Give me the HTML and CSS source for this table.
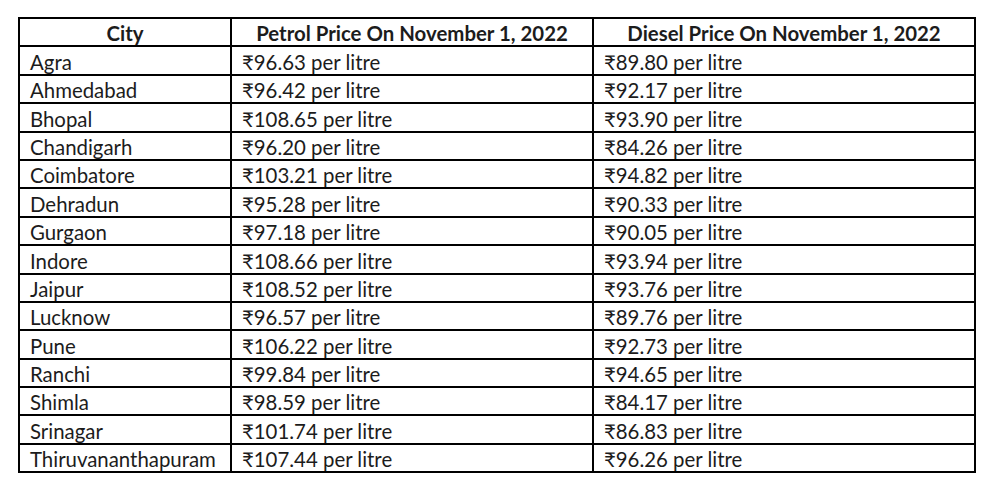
FILE: index.html
```html
<!DOCTYPE html>
<html lang="en">
<head>
<meta charset="utf-8">
<title>Fuel Prices</title>
<link rel="stylesheet" href="styles.css">
</head>
<body>
<div class="page">
<table class="prices">
<colgroup><col class="c-city"><col class="c-petrol"><col class="c-diesel"></colgroup>
<thead>
<tr><th>City</th><th>Petrol Price On November 1, 2022</th><th>Diesel Price On November 1, 2022</th></tr>
</thead>
<tbody>
<tr><td>Agra</td><td>₹96.63 per litre</td><td>₹89.80 per litre</td></tr>
<tr><td>Ahmedabad</td><td>₹96.42 per litre</td><td>₹92.17 per litre</td></tr>
<tr><td>Bhopal</td><td>₹108.65 per litre</td><td>₹93.90 per litre</td></tr>
<tr><td>Chandigarh</td><td>₹96.20 per litre</td><td>₹84.26 per litre</td></tr>
<tr><td>Coimbatore</td><td>₹103.21 per litre</td><td>₹94.82 per litre</td></tr>
<tr><td>Dehradun</td><td>₹95.28 per litre</td><td>₹90.33 per litre</td></tr>
<tr><td>Gurgaon</td><td>₹97.18 per litre</td><td>₹90.05 per litre</td></tr>
<tr><td>Indore</td><td>₹108.66 per litre</td><td>₹93.94 per litre</td></tr>
<tr><td>Jaipur</td><td>₹108.52 per litre</td><td>₹93.76 per litre</td></tr>
<tr><td>Lucknow</td><td>₹96.57 per litre</td><td>₹89.76 per litre</td></tr>
<tr><td>Pune</td><td>₹106.22 per litre</td><td>₹92.73 per litre</td></tr>
<tr><td>Ranchi</td><td>₹99.84 per litre</td><td>₹94.65 per litre</td></tr>
<tr><td>Shimla</td><td>₹98.59 per litre</td><td>₹84.17 per litre</td></tr>
<tr><td>Srinagar</td><td>₹101.74 per litre</td><td>₹86.83 per litre</td></tr>
<tr><td>Thiruvananthapuram</td><td>₹107.44 per litre</td><td>₹96.26 per litre</td></tr>
</tbody>
</table>
</div>
</body>
</html>
```
FILE: styles.css
```css
html, body {
  margin: 0;
  padding: 0;
  background: #ffffff;
}
.page {
  padding: 17px 0 0 18px;
}
.prices {
  border-collapse: collapse;
  table-layout: fixed;
  width: 956px;
  font-family: "Lato", "Noto Sans", sans-serif;
  font-size: 20.4px;
  color: #1c1c1c;
}
.c-city { width: 212px; }
.c-petrol { width: 362px; }
.c-diesel { width: 382px; }
.prices th,
.prices td {
  border: 2px solid #000;
  height: 28.4px;
  padding: 0 0 0 10px;
  box-sizing: border-box;
  text-align: left;
  white-space: nowrap;
  line-height: 24px;
  vertical-align: bottom;
}
.prices th {
  text-align: center;
  font-weight: bold;
  padding-left: 0;
}
```
